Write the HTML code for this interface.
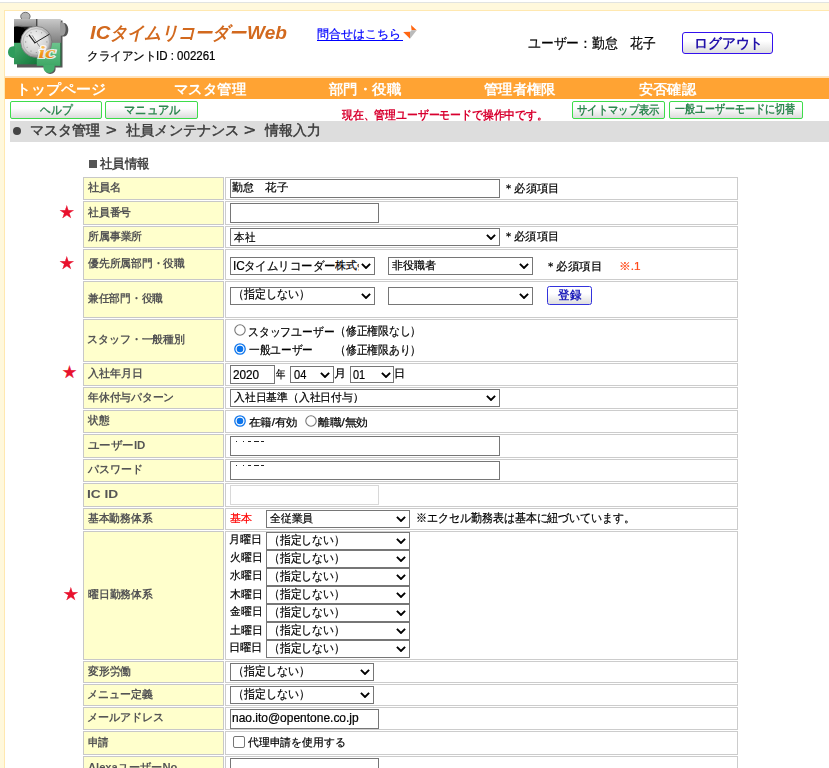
<!DOCTYPE html>
<html lang="ja"><head><meta charset="utf-8"><title>ICタイムリコーダーWeb</title>
<style>
html,body{margin:0;padding:0}
body{width:829px;height:768px;overflow:hidden;position:relative;background:#fff8dc;font-family:"Liberation Sans",sans-serif;font-size:12px;color:#000}
.a{position:absolute;box-sizing:content-box}
.tx{white-space:nowrap;transform-origin:0 0;line-height:1.2;-webkit-text-stroke:0.22px currentColor}
.u{text-decoration:underline}
#top{left:0;top:0;width:829px;height:2px;background:#fff}
#topline{left:0;top:2px;width:829px;height:1px;background:#e1e3e1}
#main{left:4px;top:10px;width:830px;height:800px;background:#fff;border:1px solid #ffe8b0}
#navhi{left:5px;top:76px;width:824px;height:2px;background:#ffe3bd}
#nav{left:5px;top:78px;width:824px;height:21px;background:#ffa333}
#crumb{left:10px;top:121px;width:819px;height:21px;background:#ddd}
.gb{top:101px;height:16px;border:1px solid #3ddc4a;border-radius:2px;background:linear-gradient(#fff,#fdfdfd 40%,#dcdcdc)}
.lc{background:#ffffcc;border:1px solid #c8c8c8}
.vc{background:#fff;border:1px solid #ccc}
.s{border:1px solid #767676;background:#fff}
.i{border:1px solid #767676;background:#fff}
.dis{border-color:#d8d8d8}
.regbtn{width:43px;height:17px;border:1.5px solid #33d;border-radius:2.5px;background:linear-gradient(#fff,#fff 40%,#ddd)}
.cb{width:10px;height:10px;border:1px solid #767676;border-radius:2px;background:#fff}
#logout{left:682px;top:32px;width:89px;height:20px;border:1.5px solid #31e;border-radius:3px;background:linear-gradient(#fff,#fff 40%,#ddd)}
</style></head><body>
<div class="a" id="top"></div><div class="a" id="topline"></div>
<div class="a" id="main"></div>
<svg class="a" style="left:0;top:0" width="80" height="80" viewBox="0 0 80 80">
<defs>
<linearGradient id="gA" x1="0" y1="0" x2="0" y2="1"><stop offset="0" stop-color="#c9c9c9"/><stop offset="1" stop-color="#7d7d7d"/></linearGradient>
<linearGradient id="gB" x1="0" y1="0" x2="0" y2="1"><stop offset="0" stop-color="#b9b9b9"/><stop offset="0.3" stop-color="#8c8c8c"/><stop offset="0.34" stop-color="#1a1a1a"/><stop offset="1" stop-color="#101010"/></linearGradient>
<linearGradient id="gG1" x1="0" y1="0" x2="1" y2="1"><stop offset="0" stop-color="#45ad6d"/><stop offset="1" stop-color="#15763a"/></linearGradient>
<linearGradient id="gG2" x1="0" y1="0" x2="0" y2="1"><stop offset="0" stop-color="#6cc48d"/><stop offset="1" stop-color="#3fa866"/></linearGradient>
<radialGradient id="gF" cx="0.42" cy="0.38" r="0.7"><stop offset="0" stop-color="#f4f4f4"/><stop offset="0.7" stop-color="#d4d4d4"/><stop offset="1" stop-color="#a8a8a8"/></radialGradient>
<linearGradient id="gR" x1="0" y1="0" x2="1" y2="1"><stop offset="0" stop-color="#f4f4f4"/><stop offset="1" stop-color="#7a7a7a"/></linearGradient>
<linearGradient id="gO" x1="0" y1="0" x2="0" y2="1"><stop offset="0" stop-color="#ffd27a"/><stop offset="0.55" stop-color="#f39a1e"/><stop offset="1" stop-color="#e07410"/></linearGradient>
<filter id="bl" x="-20%" y="-20%" width="140%" height="140%"><feGaussianBlur stdDeviation="0.5"/></filter>
</defs>
<g filter="url(#bl)">
<!-- shadow -->
<path d="M15.5 20.5 H62.5 V23 C70 21.5 70.5 38 62.5 36.5 V67.5 H55.5 C57 76 43.5 76 45 67.5 H17 V58 C8 60 8 46 15.5 47 Z" fill="#3a3a3a" opacity="0.85"/>
<!-- top tab + top-left piece -->
<ellipse cx="25.4" cy="16.4" rx="4.7" ry="4.1" fill="#b4b4b4" stroke="#555" stroke-width="0.8"/>
<rect x="22.3" y="17" width="6" height="4" fill="#b0b0b0"/>
<rect x="14" y="19" width="23" height="24" fill="url(#gB)"/>
<path d="M14 27 C20 25.5 27 28 30 36 L30 43 L14 43 Z" fill="#050505"/>
<path d="M14 26.5 C22 24.5 30 27 36.8 33 L36.8 26 L14 26 Z" fill="#6a6a6a"/>
<!-- top-right piece + right tab -->
<rect x="36.8" y="19" width="24" height="24" fill="url(#gA)"/>
<path d="M60 22.5 C68.5 20.5 69.5 37.5 60 35.5 Z" fill="#9b9b9b"/>
<path d="M64 23 C69 25 69 34 63.5 36 C66 33 66.5 27 64 23 Z" fill="#555"/>
<rect x="36.3" y="19" width="1" height="8" fill="#222"/>
<!-- bottom-left piece + left tab -->
<rect x="14" y="42.8" width="23" height="21.5" fill="url(#gG1)"/>
<path d="M15 46.5 C6 44.5 5.5 59.5 15 57.5 Z" fill="#2f9c5b"/>
<!-- bottom-right piece + bottom tab -->
<rect x="36.8" y="42.8" width="24" height="23" fill="url(#gG2)"/>
<path d="M43.5 65 C41.5 75.5 56.5 75.5 54.5 65 Z" fill="#44ad6c"/>
<rect x="60.2" y="42.8" width="1.2" height="23" fill="#2e6b45"/>
<!-- clock -->
<circle cx="36.3" cy="41.9" r="15.6" fill="url(#gR)" stroke="#6d6d6d" stroke-width="0.7"/>
<circle cx="36.3" cy="41.9" r="13.3" fill="url(#gF)" stroke="#a8a8a8" stroke-width="0.6"/>
<circle cx="36.3" cy="31.3" r="0.55" fill="#8a8a8a"/><circle cx="41.6" cy="32.7" r="0.55" fill="#8a8a8a"/><circle cx="45.5" cy="36.6" r="0.55" fill="#8a8a8a"/><circle cx="46.9" cy="41.9" r="0.55" fill="#8a8a8a"/><circle cx="45.5" cy="47.2" r="0.55" fill="#8a8a8a"/><circle cx="41.6" cy="51.1" r="0.55" fill="#8a8a8a"/><circle cx="36.3" cy="52.5" r="0.55" fill="#8a8a8a"/><circle cx="31.0" cy="51.1" r="0.55" fill="#8a8a8a"/><circle cx="27.1" cy="47.2" r="0.55" fill="#8a8a8a"/><circle cx="25.7" cy="41.9" r="0.55" fill="#8a8a8a"/><circle cx="27.1" cy="36.6" r="0.55" fill="#8a8a8a"/><circle cx="31.0" cy="32.7" r="0.55" fill="#8a8a8a"/></g>
<g stroke-linecap="round">
<path d="M35 42.8 L49.2 34.3" stroke="#222" stroke-width="1"/>
<path d="M35 42.8 L29.2 35.2" stroke="#222" stroke-width="1.2"/>
<path d="M32.3 35.7 L39.4 46.3" stroke="#444" stroke-width="0.6"/>
</g>
<text x="38.6" y="58.1" font-family="Liberation Serif, serif" font-style="italic" font-weight="bold" font-size="16.5" fill="#fff" stroke="#fff" stroke-width="2.2" opacity="0.8" textLength="17.2" lengthAdjust="spacingAndGlyphs">ic</text>
<text x="38.6" y="58.1" font-family="Liberation Serif, serif" font-style="italic" font-weight="bold" font-size="16.5" fill="url(#gO)" textLength="17.2" lengthAdjust="spacingAndGlyphs">ic</text>
</svg>

<svg class="a" style="left:402px;top:24px" width="16" height="16" viewBox="402 24 16 16"><path d="M411 25 L416.7 30.3 L411.6 30.3 Z" fill="#f61"/><path d="M411.6 30.3 L416.7 30.3 L410 38.7 L410 31.7 Z" fill="#bbb"/><path d="M403.2 31.9 L410 31.7 L410 38.7 Z" fill="#f61"/></svg>
<div class="a" style="left:317px;top:40px;width:86px;height:1px;background:#00f"></div>
<div class="a" id="logout"></div>
<div class="a" id="navhi"></div><div class="a" id="nav"></div>
<div class="a gb" style="left:10px;width:90px"></div>
<div class="a gb" style="left:105px;width:91px"></div>
<div class="a gb" style="left:572px;width:91px"></div>
<div class="a gb" style="left:669px;width:132px"></div>
<div class="a" id="crumb"></div>
<div class="a lc" style="left:83px;top:177px;width:139px;height:21px"></div>
<div class="a vc" style="left:225px;top:177px;width:511px;height:21px"></div>
<div class="a lc" style="left:83px;top:201px;width:139px;height:22px"></div>
<div class="a vc" style="left:225px;top:201px;width:511px;height:22px"></div>
<div class="a lc" style="left:83px;top:226px;width:139px;height:20px"></div>
<div class="a vc" style="left:225px;top:226px;width:511px;height:20px"></div>
<div class="a lc" style="left:83px;top:249px;width:139px;height:29px"></div>
<div class="a vc" style="left:225px;top:249px;width:511px;height:29px"></div>
<div class="a lc" style="left:83px;top:281px;width:139px;height:35px"></div>
<div class="a vc" style="left:225px;top:281px;width:511px;height:35px"></div>
<div class="a lc" style="left:83px;top:319px;width:139px;height:41px"></div>
<div class="a vc" style="left:225px;top:319px;width:511px;height:41px"></div>
<div class="a lc" style="left:83px;top:363px;width:139px;height:21px"></div>
<div class="a vc" style="left:225px;top:363px;width:511px;height:21px"></div>
<div class="a lc" style="left:83px;top:387px;width:139px;height:20px"></div>
<div class="a vc" style="left:225px;top:387px;width:511px;height:20px"></div>
<div class="a lc" style="left:83px;top:410px;width:139px;height:21px"></div>
<div class="a vc" style="left:225px;top:410px;width:511px;height:21px"></div>
<div class="a lc" style="left:83px;top:434px;width:139px;height:22px"></div>
<div class="a vc" style="left:225px;top:434px;width:511px;height:22px"></div>
<div class="a lc" style="left:83px;top:459px;width:139px;height:21px"></div>
<div class="a vc" style="left:225px;top:459px;width:511px;height:21px"></div>
<div class="a lc" style="left:83px;top:483px;width:139px;height:22px"></div>
<div class="a vc" style="left:225px;top:483px;width:511px;height:22px"></div>
<div class="a lc" style="left:83px;top:508px;width:139px;height:20px"></div>
<div class="a vc" style="left:225px;top:508px;width:511px;height:20px"></div>
<div class="a lc" style="left:83px;top:531px;width:139px;height:127px"></div>
<div class="a vc" style="left:225px;top:531px;width:511px;height:127px"></div>
<div class="a lc" style="left:83px;top:661px;width:139px;height:20px"></div>
<div class="a vc" style="left:225px;top:661px;width:511px;height:20px"></div>
<div class="a lc" style="left:83px;top:684px;width:139px;height:20px"></div>
<div class="a vc" style="left:225px;top:684px;width:511px;height:20px"></div>
<div class="a lc" style="left:83px;top:707px;width:139px;height:21px"></div>
<div class="a vc" style="left:225px;top:707px;width:511px;height:21px"></div>
<div class="a lc" style="left:83px;top:731px;width:139px;height:22px"></div>
<div class="a vc" style="left:225px;top:731px;width:511px;height:22px"></div>
<div class="a lc" style="left:83px;top:756px;width:139px;height:23px"></div>
<div class="a vc" style="left:225px;top:756px;width:511px;height:23px"></div>
<div class="a" style="left:13px;top:127px;width:8px;height:8px;border-radius:4px;background:#444"></div>
<div class="a" style="left:89px;top:160px;width:8px;height:8px;background:#555"></div>
<div class="a i" style="left:230px;top:179px;width:268px;height:17px"></div>
<div class="a i" style="left:230px;top:203px;width:147px;height:18px"></div>
<div class="a s" style="left:230px;top:228px;width:268px;height:16px"></div>
<svg class="a" style="left:486px;top:234px" width="10" height="6" viewBox="0 0 10 6"><path d="M0.9 0.9 L5 5 L9.1 0.9" fill="none" stroke="#000" stroke-width="1.9"/></svg>
<div class="a s" style="left:230px;top:257px;width:143px;height:16px"></div>
<svg class="a" style="left:361px;top:263px" width="10" height="6" viewBox="0 0 10 6"><path d="M0.9 0.9 L5 5 L9.1 0.9" fill="none" stroke="#000" stroke-width="1.9"/></svg>
<div class="a s" style="left:388px;top:257px;width:143px;height:16px"></div>
<svg class="a" style="left:519px;top:263px" width="10" height="6" viewBox="0 0 10 6"><path d="M0.9 0.9 L5 5 L9.1 0.9" fill="none" stroke="#000" stroke-width="1.9"/></svg>
<div class="a s" style="left:230px;top:287px;width:143px;height:16px"></div>
<svg class="a" style="left:361px;top:293px" width="10" height="6" viewBox="0 0 10 6"><path d="M0.9 0.9 L5 5 L9.1 0.9" fill="none" stroke="#000" stroke-width="1.9"/></svg>
<div class="a s" style="left:388px;top:287px;width:143px;height:16px"></div>
<svg class="a" style="left:519px;top:293px" width="10" height="6" viewBox="0 0 10 6"><path d="M0.9 0.9 L5 5 L9.1 0.9" fill="none" stroke="#000" stroke-width="1.9"/></svg>
<div class="a regbtn" style="left:547px;top:286px"></div>
<svg class="a" style="left:232.5px;top:322.6px" width="14" height="14"><circle cx="7" cy="7" r="5.2" fill="#fff" stroke="#767676" stroke-width="1.1"/></svg>
<svg class="a" style="left:232.5px;top:341.9px" width="14" height="14"><circle cx="7" cy="7" r="5.2" fill="#fff" stroke="#0b74ec" stroke-width="1.3"/><circle cx="7" cy="7" r="3.3" fill="#0b74ec"/></svg>
<div class="a i" style="left:230px;top:365px;width:43px;height:17px"></div>
<div class="a s" style="left:290px;top:366px;width:42px;height:15px"></div>
<svg class="a" style="left:320px;top:372px" width="10" height="6" viewBox="0 0 10 6"><path d="M0.9 0.9 L5 5 L9.1 0.9" fill="none" stroke="#000" stroke-width="1.9"/></svg>
<div class="a s" style="left:350px;top:366px;width:42px;height:15px"></div>
<svg class="a" style="left:380.5px;top:372px" width="10" height="6" viewBox="0 0 10 6"><path d="M0.9 0.9 L5 5 L9.1 0.9" fill="none" stroke="#000" stroke-width="1.9"/></svg>
<div class="a s" style="left:230px;top:389px;width:268px;height:16px"></div>
<svg class="a" style="left:486px;top:395px" width="10" height="6" viewBox="0 0 10 6"><path d="M0.9 0.9 L5 5 L9.1 0.9" fill="none" stroke="#000" stroke-width="1.9"/></svg>
<svg class="a" style="left:232.5px;top:413.5px" width="14" height="14"><circle cx="7" cy="7" r="5.2" fill="#fff" stroke="#0b74ec" stroke-width="1.3"/><circle cx="7" cy="7" r="3.3" fill="#0b74ec"/></svg>
<svg class="a" style="left:303.6px;top:413.5px" width="14" height="14"><circle cx="7" cy="7" r="5.2" fill="#fff" stroke="#767676" stroke-width="1.1"/></svg>
<div class="a i" style="left:230px;top:436px;width:268px;height:18px"></div>
<div class="a i" style="left:230px;top:461px;width:268px;height:17px"></div>
<div class="a" style="left:236px;top:441px;width:1px;height:1px;background:#222"></div>
<div class="a" style="left:243px;top:441px;width:1px;height:1px;background:#222"></div>
<div class="a" style="left:248px;top:441px;width:3px;height:1px;background:#222"></div>
<div class="a" style="left:254px;top:441px;width:5px;height:1px;background:#222"></div>
<div class="a" style="left:261px;top:441px;width:3px;height:1px;background:#222"></div>
<div class="a" style="left:236px;top:465px;width:1px;height:1px;background:#222"></div>
<div class="a" style="left:243px;top:465px;width:1px;height:1px;background:#222"></div>
<div class="a" style="left:248px;top:465px;width:3px;height:1px;background:#222"></div>
<div class="a" style="left:254px;top:465px;width:5px;height:1px;background:#222"></div>
<div class="a" style="left:261px;top:465px;width:3px;height:1px;background:#222"></div>
<div class="a i dis" style="left:230px;top:485px;width:147px;height:18px"></div>
<div class="a s" style="left:266px;top:510px;width:142px;height:16px"></div>
<svg class="a" style="left:396px;top:516px" width="10" height="6" viewBox="0 0 10 6"><path d="M0.9 0.9 L5 5 L9.1 0.9" fill="none" stroke="#000" stroke-width="1.9"/></svg>
<div class="a s" style="left:266px;top:532px;width:142px;height:16px"></div>
<svg class="a" style="left:396px;top:538px" width="10" height="6" viewBox="0 0 10 6"><path d="M0.9 0.9 L5 5 L9.1 0.9" fill="none" stroke="#000" stroke-width="1.9"/></svg>
<div class="a s" style="left:266px;top:550px;width:142px;height:16px"></div>
<svg class="a" style="left:396px;top:556px" width="10" height="6" viewBox="0 0 10 6"><path d="M0.9 0.9 L5 5 L9.1 0.9" fill="none" stroke="#000" stroke-width="1.9"/></svg>
<div class="a s" style="left:266px;top:568px;width:142px;height:16px"></div>
<svg class="a" style="left:396px;top:574px" width="10" height="6" viewBox="0 0 10 6"><path d="M0.9 0.9 L5 5 L9.1 0.9" fill="none" stroke="#000" stroke-width="1.9"/></svg>
<div class="a s" style="left:266px;top:586px;width:142px;height:16px"></div>
<svg class="a" style="left:396px;top:592px" width="10" height="6" viewBox="0 0 10 6"><path d="M0.9 0.9 L5 5 L9.1 0.9" fill="none" stroke="#000" stroke-width="1.9"/></svg>
<div class="a s" style="left:266px;top:604px;width:142px;height:16px"></div>
<svg class="a" style="left:396px;top:610px" width="10" height="6" viewBox="0 0 10 6"><path d="M0.9 0.9 L5 5 L9.1 0.9" fill="none" stroke="#000" stroke-width="1.9"/></svg>
<div class="a s" style="left:266px;top:622px;width:142px;height:16px"></div>
<svg class="a" style="left:396px;top:628px" width="10" height="6" viewBox="0 0 10 6"><path d="M0.9 0.9 L5 5 L9.1 0.9" fill="none" stroke="#000" stroke-width="1.9"/></svg>
<div class="a s" style="left:266px;top:640px;width:142px;height:16px"></div>
<svg class="a" style="left:396px;top:646px" width="10" height="6" viewBox="0 0 10 6"><path d="M0.9 0.9 L5 5 L9.1 0.9" fill="none" stroke="#000" stroke-width="1.9"/></svg>
<div class="a s" style="left:230px;top:663px;width:142px;height:16px"></div>
<svg class="a" style="left:360px;top:669px" width="10" height="6" viewBox="0 0 10 6"><path d="M0.9 0.9 L5 5 L9.1 0.9" fill="none" stroke="#000" stroke-width="1.9"/></svg>
<div class="a s" style="left:230px;top:686px;width:142px;height:16px"></div>
<svg class="a" style="left:360px;top:692px" width="10" height="6" viewBox="0 0 10 6"><path d="M0.9 0.9 L5 5 L9.1 0.9" fill="none" stroke="#000" stroke-width="1.9"/></svg>
<div class="a i" style="left:230px;top:709px;width:147px;height:18px"></div>
<div class="a cb" style="left:233px;top:736px"></div>
<div class="a i" style="left:230px;top:758px;width:147px;height:18px"></div>
<div class="a tx" id="t0" style="left:87.99px;top:181.02px;font-size:11px;font-weight:bold;color:#555;-webkit-text-stroke:0;transform:scaleX(1.0115)">社員名</div>
<div class="a tx" id="t1" style="left:88.00px;top:205.52px;font-size:11px;font-weight:bold;color:#555;-webkit-text-stroke:0;transform:scaleX(0.9791)">社員番号</div>
<div class="a tx" id="t2" style="left:87.51px;top:229.60px;font-size:11px;font-weight:bold;color:#555;-webkit-text-stroke:0;transform:scaleX(0.9866)">所属事業所</div>
<div class="a tx" id="t3" style="left:87.58px;top:257.27px;font-size:11px;font-weight:bold;color:#555;-webkit-text-stroke:0;transform:scaleX(0.9780)">優先所属部門・役職</div>
<div class="a tx" id="t4" style="left:88.09px;top:292.11px;font-size:11px;font-weight:bold;color:#555;-webkit-text-stroke:0;transform:scaleX(0.9749)">兼任部門・役職</div>
<div class="a tx" id="t5" style="left:86.53px;top:332.76px;font-size:11px;font-weight:bold;color:#555;-webkit-text-stroke:0;transform:scaleX(0.9917)">スタッフ・一般種別</div>
<div class="a tx" id="t6" style="left:87.87px;top:367.23px;font-size:11px;font-weight:bold;color:#555;-webkit-text-stroke:0;transform:scaleX(0.9995)">入社年月日</div>
<div class="a tx" id="t7" style="left:88.23px;top:390.79px;font-size:11px;font-weight:bold;color:#555;-webkit-text-stroke:0;transform:scaleX(0.9786)">年休付与パターン</div>
<div class="a tx" id="t8" style="left:87.81px;top:414.20px;font-size:11px;font-weight:bold;color:#555;-webkit-text-stroke:0;transform:scaleX(0.9605)">状態</div>
<div class="a tx" id="t9" style="left:87.88px;top:438.58px;font-size:11px;font-weight:bold;color:#555;-webkit-text-stroke:0;transform:scaleX(1.0428)">ユーザーID</div>
<div class="a tx" id="t10" style="left:87.83px;top:462.64px;font-size:11px;font-weight:bold;color:#555;-webkit-text-stroke:0;transform:scaleX(0.9903)">パスワード</div>
<div class="a tx" id="t11" style="left:87.35px;top:488.27px;font-size:11px;font-weight:bold;color:#555;-webkit-text-stroke:0;transform:scaleX(1.2477)">IC ID</div>
<div class="a tx" id="t12" style="left:87.51px;top:511.61px;font-size:11px;font-weight:bold;color:#555;-webkit-text-stroke:0;transform:scaleX(0.9748)">基本勤務体系</div>
<div class="a tx" id="t13" style="left:87.83px;top:588.38px;font-size:11px;font-weight:bold;color:#555;-webkit-text-stroke:0;transform:scaleX(0.9784)">曜日勤務体系</div>
<div class="a tx" id="t14" style="left:87.87px;top:664.83px;font-size:11px;font-weight:bold;color:#555;-webkit-text-stroke:0;transform:scaleX(0.9833)">変形労働</div>
<div class="a tx" id="t15" style="left:86.76px;top:687.89px;font-size:11px;font-weight:bold;color:#555;-webkit-text-stroke:0;transform:scaleX(0.9924)">メニュー定義</div>
<div class="a tx" id="t16" style="left:86.53px;top:710.62px;font-size:11px;font-weight:bold;color:#555;-webkit-text-stroke:0;transform:scaleX(0.9998)">メールアドレス</div>
<div class="a tx" id="t17" style="left:87.68px;top:735.65px;font-size:11px;font-weight:bold;color:#555;-webkit-text-stroke:0;transform:scaleX(0.9541)">申請</div>
<div class="a tx" id="t18" style="left:87.60px;top:760.90px;font-size:11px;font-weight:bold;color:#555;-webkit-text-stroke:0;transform:scaleX(1.0150)">AlexaユーザーNo</div>
<div class="a tx" id="t19" style="left:58.57px;top:202.74px;font-size:15px;color:#e8112d;transform:scaleX(1.0352)">★</div>
<div class="a tx" id="t20" style="left:58.57px;top:253.74px;font-size:15px;color:#e8112d;transform:scaleX(1.0352)">★</div>
<div class="a tx" id="t21" style="left:62.10px;top:363.00px;font-size:15px;color:#e8112d;transform:scaleX(1.0000)">★</div>
<div class="a tx" id="t22" style="left:63.37px;top:584.79px;font-size:15px;color:#e8112d;transform:scaleX(1.0445)">★</div>
<div class="a tx" id="t23" style="left:90.24px;top:23.35px;font-size:18px;font-weight:bold;font-style:italic;color:#d2691e;-webkit-text-stroke:0;transform:scaleX(1.1275)">IC</div>
<div class="a tx" id="t24" style="left:110.12px;top:22.59px;font-size:18px;font-weight:bold;font-style:italic;color:#d2691e;-webkit-text-stroke:0;transform:scaleX(0.9470)">タイムリコーダー</div>
<div class="a tx" id="t25" style="left:247.24px;top:22.72px;font-size:18px;font-weight:bold;font-style:italic;color:#d2691e;-webkit-text-stroke:0;transform:scaleX(1.0587)">Web</div>
<div class="a tx" id="t26" style="left:86.63px;top:49.42px;font-size:12px;transform:scaleX(0.9587)">クライアントID : 002261</div>
<div class="a tx" id="t27" style="left:316.55px;top:26.88px;font-size:12px;color:#00f;transform:scaleX(0.9951)">問合せはこちら</div>
<div class="a tx" id="t28" style="left:527.50px;top:34.77px;font-size:14px;transform:scaleX(0.9134)">ユーザー：勤怠　花子</div>
<div class="a tx" id="t29" style="left:693.75px;top:35.04px;font-size:14px;font-weight:bold;color:#21a;-webkit-text-stroke:0;transform:scaleX(0.9900)">ログアウト</div>
<div class="a tx" id="t30" style="left:16.37px;top:81.30px;font-size:14px;font-weight:bold;color:#fff;-webkit-text-stroke:0;transform:scaleX(1.0646)">トップページ</div>
<div class="a tx" id="t31" style="left:174.26px;top:80.86px;font-size:14px;font-weight:bold;color:#fff;-webkit-text-stroke:0;transform:scaleX(1.0296)">マスタ管理</div>
<div class="a tx" id="t32" style="left:329.12px;top:80.64px;font-size:14px;font-weight:bold;color:#fff;-webkit-text-stroke:0;transform:scaleX(1.0320)">部門・役職</div>
<div class="a tx" id="t33" style="left:483.65px;top:80.93px;font-size:14px;font-weight:bold;color:#fff;-webkit-text-stroke:0;transform:scaleX(1.0240)">管理者権限</div>
<div class="a tx" id="t34" style="left:639.26px;top:80.87px;font-size:14px;font-weight:bold;color:#fff;-webkit-text-stroke:0;transform:scaleX(1.0123)">安否確認</div>
<div class="a tx" id="t35" style="left:40.44px;top:102.56px;font-size:12px;font-weight:bold;color:#2e8650;-webkit-text-stroke:0;transform:scaleX(0.9008)">ヘルプ</div>
<div class="a tx" id="t36" style="left:124.06px;top:102.77px;font-size:12px;font-weight:bold;color:#2e8650;-webkit-text-stroke:0;transform:scaleX(0.9425)">マニュアル</div>
<div class="a tx" id="t37" style="left:577.40px;top:102.82px;font-size:12px;font-weight:bold;color:#2e8650;-webkit-text-stroke:0;transform:scaleX(0.8600)">サイトマップ表示</div>
<div class="a tx" id="t38" style="left:674.68px;top:102.30px;font-size:12px;font-weight:bold;color:#2e8650;-webkit-text-stroke:0;transform:scaleX(0.8364)">一般ユーザーモードに切替</div>
<div class="a tx" id="t39" style="left:342.25px;top:107.90px;font-size:12px;font-weight:bold;color:#d8002f;-webkit-text-stroke:0;transform:scaleX(0.9022)">現在、管理ユーザーモードで操作中です。</div>
<div class="a tx" id="t40" style="left:29.91px;top:121.75px;font-size:14px;color:#3a3a3a;-webkit-text-stroke:0.45px #3a3a3a;transform:scaleX(1.0069)">マスタ管理</div>
<div class="a tx" id="t41" style="left:106.40px;top:122.44px;font-size:14px;color:#3a3a3a;-webkit-text-stroke:0.45px #3a3a3a;transform:scaleX(1.3069)">&gt;</div>
<div class="a tx" id="t42" style="left:125.65px;top:121.64px;font-size:14px;color:#3a3a3a;-webkit-text-stroke:0.45px #3a3a3a;transform:scaleX(1.0145)">社員メンテナンス</div>
<div class="a tx" id="t43" style="left:244.30px;top:122.26px;font-size:14px;color:#3a3a3a;-webkit-text-stroke:0.45px #3a3a3a;transform:scaleX(1.3904)">&gt;</div>
<div class="a tx" id="t44" style="left:264.97px;top:121.76px;font-size:14px;color:#3a3a3a;-webkit-text-stroke:0.45px #3a3a3a;transform:scaleX(0.9962)">情報入力</div>
<div class="a tx" id="t45" style="left:99.75px;top:155.70px;font-size:13px;font-weight:bold;color:#444;-webkit-text-stroke:0;transform:scaleX(0.9575)">社員情報</div>
<div class="a tx" id="t46" style="left:232.34px;top:180.74px;font-size:11px;transform:scaleX(0.9874)">勤怠</div>
<div class="a tx" id="t47" style="left:265.31px;top:180.90px;font-size:11px;transform:scaleX(1.0479)">花子</div>
<div class="a tx" id="t48" style="left:502.98px;top:181.82px;font-size:11px;transform:scaleX(1.0258)">＊必須項目</div>
<div class="a tx" id="t49" style="left:233.94px;top:230.61px;font-size:11px;transform:scaleX(0.9555)">本社</div>
<div class="a tx" id="t50" style="left:502.75px;top:230.31px;font-size:11px;transform:scaleX(1.0208)">＊必須項目</div>
<div class="a tx" id="t51" style="left:233.46px;top:259.44px;font-size:12px;transform:scaleX(0.9809)">IC</div>
<div class="a tx" id="t52" style="left:244.15px;top:258.83px;font-size:12px;transform:scaleX(0.9548)">タイムリコーダー</div>
<div class="a tx" id="t53" style="left:335.00px;top:258.60px;font-size:11px;overflow:hidden;width:23.6px;transform:scaleX(1.0000)">株式会</div>
<div class="a tx" id="t54" style="left:392.16px;top:259.31px;font-size:11px;transform:scaleX(1.0022)">非役職者</div>
<div class="a tx" id="t55" style="left:545.20px;top:260.15px;font-size:11px;transform:scaleX(1.0403)">＊必須項目</div>
<div class="a tx" id="t56" style="left:619.06px;top:260.08px;font-size:11px;color:#ff4a1a;transform:scaleX(1.0734)">※.1</div>
<div class="a tx" id="t57" style="left:233.30px;top:287.30px;font-size:12px;transform:scaleX(0.9129)">（指定しない）</div>
<div class="a tx" id="t58" style="left:557.71px;top:288.23px;font-size:12px;font-weight:bold;color:#22b;-webkit-text-stroke:0;transform:scaleX(0.9600)">登録</div>
<div class="a tx" id="t59" style="left:247.86px;top:324.52px;font-size:12px;transform:scaleX(0.9008)">スタッフユーザー</div>
<div class="a tx" id="t60" style="left:335.39px;top:323.96px;font-size:12px;transform:scaleX(0.8976)">（修正権限なし）</div>
<div class="a tx" id="t61" style="left:248.62px;top:342.57px;font-size:12px;transform:scaleX(0.8907)">一般ユーザー</div>
<div class="a tx" id="t62" style="left:335.39px;top:342.75px;font-size:12px;transform:scaleX(0.8976)">（修正権限あり）</div>
<div class="a tx" id="t63" style="left:232.82px;top:367.52px;font-size:12px;transform:scaleX(0.9796)">2020</div>
<div class="a tx" id="t64" style="left:275.52px;top:367.51px;font-size:11px;transform:scaleX(0.8581)">年</div>
<div class="a tx" id="t65" style="left:293.51px;top:367.52px;font-size:12px;transform:scaleX(0.9211)">04</div>
<div class="a tx" id="t66" style="left:334.45px;top:367.05px;font-size:11px;transform:scaleX(1.1054)">月</div>
<div class="a tx" id="t67" style="left:353.31px;top:367.84px;font-size:12px;transform:scaleX(0.9085)">01</div>
<div class="a tx" id="t68" style="left:393.91px;top:367.18px;font-size:11px;transform:scaleX(1.0112)">日</div>
<div class="a tx" id="t69" style="left:233.95px;top:390.77px;font-size:11px;transform:scaleX(0.9817)">入社日基準（入社日付与）</div>
<div class="a tx" id="t70" style="left:248.80px;top:415.52px;font-size:11px;transform:scaleX(1.0354)">在籍/有効</div>
<div class="a tx" id="t71" style="left:317.68px;top:415.75px;font-size:11px;transform:scaleX(1.0677)">離職/無効</div>
<div class="a tx" id="t72" style="left:229.89px;top:511.71px;font-size:11px;color:#f00;transform:scaleX(1.0022)">基本</div>
<div class="a tx" id="t73" style="left:270.29px;top:511.51px;font-size:11px;transform:scaleX(0.9800)">全従業員</div>
<div class="a tx" id="t74" style="left:416.45px;top:510.89px;font-size:12px;transform:scaleX(0.9129)">※エクセル勤務表は基本に紐づいています。</div>
<div class="a tx" id="t75" style="left:229.25px;top:533.27px;font-size:11px;transform:scaleX(0.9981)">月曜日</div>
<div class="a tx" id="t76" style="left:269.47px;top:533.27px;font-size:12px;transform:scaleX(0.9001)">（指定しない）</div>
<div class="a tx" id="t77" style="left:229.87px;top:551.49px;font-size:11px;transform:scaleX(0.9816)">火曜日</div>
<div class="a tx" id="t78" style="left:269.47px;top:551.27px;font-size:12px;transform:scaleX(0.9001)">（指定しない）</div>
<div class="a tx" id="t79" style="left:229.97px;top:569.38px;font-size:11px;transform:scaleX(0.9785)">水曜日</div>
<div class="a tx" id="t80" style="left:269.47px;top:569.27px;font-size:12px;transform:scaleX(0.9001)">（指定しない）</div>
<div class="a tx" id="t81" style="left:229.85px;top:587.52px;font-size:11px;transform:scaleX(0.9836)">木曜日</div>
<div class="a tx" id="t82" style="left:269.47px;top:587.27px;font-size:12px;transform:scaleX(0.9001)">（指定しない）</div>
<div class="a tx" id="t83" style="left:229.83px;top:605.46px;font-size:11px;transform:scaleX(0.9802)">金曜日</div>
<div class="a tx" id="t84" style="left:269.47px;top:605.27px;font-size:12px;transform:scaleX(0.9001)">（指定しない）</div>
<div class="a tx" id="t85" style="left:229.65px;top:623.86px;font-size:11px;transform:scaleX(0.9901)">土曜日</div>
<div class="a tx" id="t86" style="left:269.47px;top:623.27px;font-size:12px;transform:scaleX(0.9001)">（指定しない）</div>
<div class="a tx" id="t87" style="left:228.51px;top:641.38px;font-size:11px;transform:scaleX(1.0160)">日曜日</div>
<div class="a tx" id="t88" style="left:269.47px;top:641.27px;font-size:12px;transform:scaleX(0.9001)">（指定しない）</div>
<div class="a tx" id="t89" style="left:233.30px;top:663.52px;font-size:12px;transform:scaleX(0.9104)">（指定しない）</div>
<div class="a tx" id="t90" style="left:233.30px;top:686.52px;font-size:12px;transform:scaleX(0.9104)">（指定しない）</div>
<div class="a tx" id="t91" style="left:231.93px;top:710.71px;font-size:12px;transform:scaleX(0.9979)">nao.ito@opentone.co.jp</div>
<div class="a tx" id="t92" style="left:247.68px;top:736.42px;font-size:11px;transform:scaleX(0.9836)">代理申請を使用する</div>
</body></html>
